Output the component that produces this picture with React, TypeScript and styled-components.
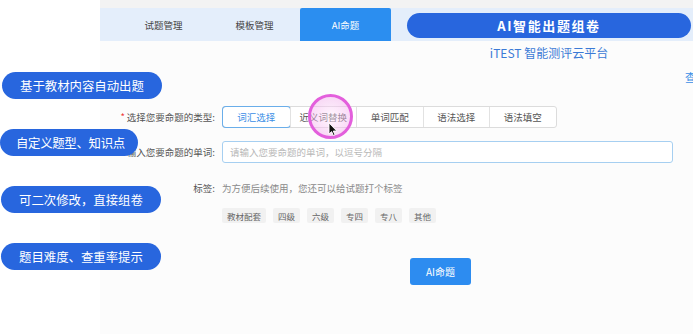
import styled, { createGlobalStyle } from "styled-components";

const GlobalStyle = createGlobalStyle`
  html, body {
    margin: 0;
    padding: 0;
    background: #fff;
  }
  * {
    box-sizing: border-box;
  }
`;

const FONT = `"Noto Sans CJK SC", "Noto Sans", sans-serif`;

const Layout = styled.div`
  position: relative;
  width: 693px;
  height: 334px;
  display: flex;
  overflow: hidden;
  font-family: ${FONT};
  background: #fff;
`;

const Gutter = styled.div`
  width: 100px;
  flex-shrink: 0;
  background: #fff;
`;

const Panel = styled.div`
  flex: 1;
  display: flex;
  flex-direction: column;
  background: #fcfcfc;
  overflow: hidden;
`;

const TopStrip = styled.div`
  height: 8px;
  background: #f3f3f3;
`;

const TabBar = styled.div`
  height: 33px;
  display: flex;
  padding-left: 18px;
  background: #e4eefb;
`;

const Tab = styled.div<{ $active?: boolean }>`
  width: 91px;
  display: flex;
  align-items: center;
  justify-content: center;
  font-size: 9.5px;
  color: ${(p) => (p.$active ? "#fff" : "#444")};
  background: ${(p) => (p.$active ? "#2b8ef0" : "transparent")};
  border-radius: ${(p) => (p.$active ? "2px 2px 0 0" : "0")};
`;

const LinkRow = styled.div`
  height: 65px;
  display: flex;
  justify-content: flex-end;
  padding-top: 28px;
`;

const EdgeLink = styled.span`
  font-size: 11px;
  color: #3a8ee6;
  margin-right: -36px;
  white-space: nowrap;
`;

const Form = styled.div`
  display: flex;
  flex-direction: column;
`;

const Row = styled.div<{ $gap?: number }>`
  display: flex;
  align-items: center;
  margin-bottom: ${(p) => p.$gap ?? 0}px;
`;

const Label = styled.div`
  width: 115px;
  flex-shrink: 0;
  text-align: right;
  font-size: 9.5px;
  color: #555;
  white-space: nowrap;
  margin-right: 7px;
`;

const Required = styled.span`
  color: #e33;
  margin-right: 2px;
`;

const Segments = styled.div`
  display: flex;
  height: 22px;
  border: 1px solid #dcdcdc;
  border-radius: 3px;
  background: #fff;
`;

const Segment = styled.div<{ $active?: boolean }>`
  width: 66.5px;
  display: flex;
  align-items: center;
  justify-content: center;
  font-size: 9.5px;
  color: ${(p) => (p.$active ? "#3a8ee6" : "#555")};
  border-left: 1px solid #e2e2e2;
  box-shadow: ${(p) => (p.$active ? "0 0 0 1px #6aaeea" : "none")};
  border-radius: ${(p) => (p.$active ? "3px" : "0")};
  position: relative;

  &:first-child {
    border-left: none;
  }
`;

const WordInput = styled.div`
  width: 451px;
  height: 22px;
  display: flex;
  align-items: center;
  padding-left: 7px;
  border: 1.5px solid #a6cff1;
  border-radius: 3px;
  background: #fff;
  font-size: 9.5px;
  color: #b8b8b8;
`;

const Hint = styled.div`
  font-size: 9.5px;
  color: #8a8a8a;
`;

const TagList = styled.div`
  display: flex;
  gap: 7px;
  margin-left: 122px;
`;

const Tag = styled.div`
  height: 15px;
  padding: 0 5px;
  display: flex;
  align-items: center;
  font-size: 8.5px;
  color: #666;
  background: #f1f1f1;
  border-radius: 2px;
`;

const SubmitButton = styled.div`
  margin-left: 310px;
  width: 61px;
  height: 27px;
  display: flex;
  align-items: center;
  justify-content: center;
  font-size: 10px;
  color: #fff;
  background: #2d8cf0;
  border-radius: 3px;
`;

/* annotation overlays */

const FeatureList = styled.div`
  position: absolute;
  left: 0;
  top: 72px;
  display: flex;
  flex-direction: column;
  gap: 30px;
`;

const FeaturePill = styled.div<{ $shift?: number; $tight?: boolean }>`
  align-self: flex-start;
  height: 27px;
  margin-left: ${(p) => p.$shift ?? 0}px;
  padding: ${(p) => (p.$tight ? "0 13px 0 16px" : "0 18px")};
  display: flex;
  align-items: center;
  font-size: 12.4px;
  letter-spacing: ${(p) => (p.$tight ? "-0.3px" : "0")};
  color: #fff;
  background: #2866de;
  border-radius: 14px;
  white-space: nowrap;
`;

const Banner = styled.div`
  position: absolute;
  left: 407px;
  top: 13px;
  width: 284px;
  display: flex;
  flex-direction: column;
  align-items: center;
`;

const BannerPill = styled.div`
  width: 100%;
  height: 25px;
  display: flex;
  align-items: center;
  justify-content: center;
  font-size: 13px;
  font-weight: 700;
  letter-spacing: 1.6px;
  color: #fff;
  background: #2866de;
  border-radius: 13px;
`;

const BannerCaption = styled.div`
  margin-top: 6px;
  font-size: 12px;
  color: #3b7ad6;
`;

const CursorMark = styled.div`
  position: absolute;
  left: 308px;
  top: 94px;
  width: 45px;
  height: 45px;
  border-radius: 50%;
  border: 3px solid #e35fdc;
  background: radial-gradient(circle, rgba(255, 235, 252, 0.45) 0%, rgba(240, 150, 232, 0.45) 100%);
`;

const CursorArrow = styled.svg`
  position: absolute;
  left: 328px;
  top: 122px;
`;

const types = ["词汇选择", "近义词替换", "单词匹配", "语法选择", "语法填空"];
const tags = ["教材配套", "四级", "六级", "专四", "专八", "其他"];
const features = [
  { text: "基于教材内容自动出题", shift: 2, tight: false },
  { text: "自定义题型、知识点", shift: 0, tight: true },
  { text: "可二次修改，直接组卷", shift: 1, tight: false },
  { text: "题目难度、查重率提示", shift: 1, tight: false },
];

const App = () => {
  return (
    <Layout>
      <GlobalStyle />
      <Gutter />
      <Panel>
        <TopStrip />
        <TabBar>
          <Tab>试题管理</Tab>
          <Tab>模板管理</Tab>
          <Tab $active>AI命题</Tab>
        </TabBar>
        <LinkRow>
          <EdgeLink>查看记录</EdgeLink>
        </LinkRow>
        <Form>
          <Row $gap={13}>
            <Label>
              <Required>*</Required>选择您要命题的类型:
            </Label>
            <Segments>
              {types.map((item, index) => (
                <Segment key={item} $active={index === 0}>
                  {item}
                </Segment>
              ))}
            </Segments>
          </Row>
          <Row $gap={18}>
            <Label>输入您要命题的单词:</Label>
            <WordInput>请输入您要命题的单词，以逗号分隔</WordInput>
          </Row>
          <Row $gap={13}>
            <Label>标签:</Label>
            <Hint>为方便后续使用，您还可以给试题打个标签</Hint>
          </Row>
          <TagList>
            {tags.map((item) => (
              <Tag key={item}>{item}</Tag>
            ))}
          </TagList>
          <Row style={{ marginTop: 35 }}>
            <SubmitButton>AI命题</SubmitButton>
          </Row>
        </Form>
      </Panel>

      <Banner>
        <BannerPill>AI智能出题组卷</BannerPill>
        <BannerCaption>iTEST 智能测评云平台</BannerCaption>
      </Banner>

      <FeatureList>
        {features.map((item) => (
          <FeaturePill key={item.text} $shift={item.shift} $tight={item.tight}>
            {item.text}
          </FeaturePill>
        ))}
      </FeatureList>

      <CursorMark />
      <CursorArrow width="10" height="15" viewBox="0 0 10 15">
        <path
          d="M1 1 L1 12 L3.6 9.6 L5.4 13.6 L7 12.9 L5.3 9 L8.8 9 Z"
          fill="#111"
          stroke="#fff"
          strokeWidth="0.9"
          strokeLinejoin="round"
        />
      </CursorArrow>
    </Layout>
  );
};

export default App;
